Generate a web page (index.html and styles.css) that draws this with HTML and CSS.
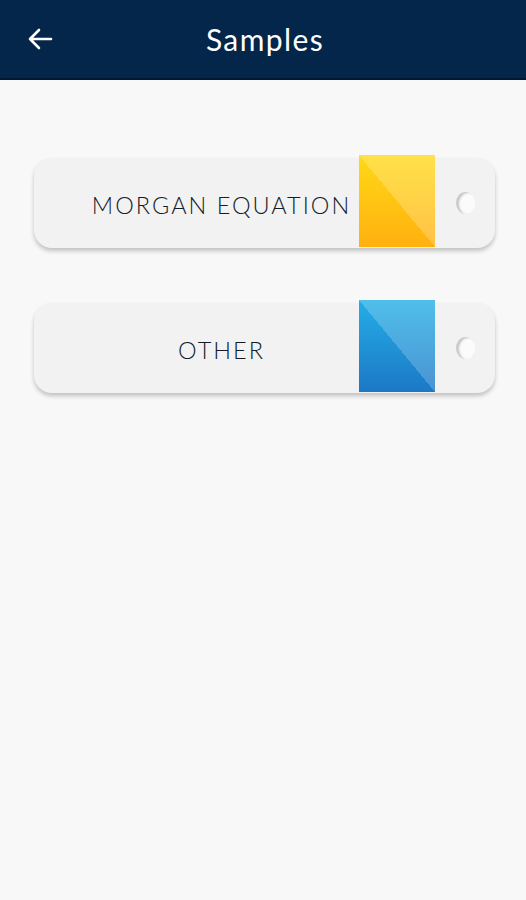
FILE: index.html
```html
<!DOCTYPE html>
<html lang="en">
<head>
  <meta charset="UTF-8" />
  <meta name="viewport" content="width=device-width, initial-scale=1.0"/>
  <title>Samples</title>
  <link rel="stylesheet" href="styles.css">
</head>
<body>

  <header class="topbar">
    <button class="back" aria-label="Back">
      <svg width="28" height="24" viewBox="0 0 28 24">
        <path d="M25 12H4M13 3L4 12l9 9" fill="none" stroke="#fff" stroke-width="2.6" stroke-linecap="round" stroke-linejoin="round"/>
      </svg>
    </button>
    <h1>Samples</h1>
  </header>

  <main class="list">
    <div class="tag">
      <span class="label">MORGAN EQUATION</span>
      <span class="swatch yellow"></span>
      <span class="hole-wrap"><span class="hole"></span></span>
    </div>
    <div class="tag">
      <span class="label">OTHER</span>
      <span class="swatch blue"></span>
      <span class="hole-wrap"><span class="hole"></span></span>
    </div>
  </main>

</body>
</html>
```

FILE: styles.css
```css
body {
  margin: 0;
  font-family: "Lato", "Noto Sans", sans-serif;
  background: #f8f8f8;
  min-height: 900px;
}
.topbar {
  height: 78px;
  background: #03264a;
  border-bottom: 2px solid #011a33;
  display: flex;
  align-items: center;
  justify-content: center;
  position: relative;
}
.topbar h1 {
  margin: 0 0 0 4px;
  color: #fff;
  font-size: 30px;
  font-weight: 400;
  letter-spacing: 1.4px;
}
.back {
  position: absolute;
  left: 26px;
  top: 27px;
  background: none;
  border: none;
  padding: 0;
  display: flex;
}
.list {
  padding: 78px 31px 0 34px;
  display: flex;
  flex-direction: column;
  gap: 55px;
}
.tag {
  height: 90px;
  background: #f2f2f2;
  border-radius: 18px;
  box-shadow: 0 3px 4px rgba(0,0,0,0.22);
  display: flex;
}
.label {
  flex: 1;
  padding: 4px 0 0 50px;
  display: flex;
  align-items: center;
  justify-content: center;
  font-size: 23.5px;
  font-weight: 300;
  letter-spacing: 2px;
  color: #141c2a;
}
.swatch {
  width: 76px;
  margin: -3px 0 1px;
}
.yellow {
  background:
    linear-gradient(to bottom left, rgba(255,255,255,0.22) 50%, rgba(255,255,255,0) 50%),
    linear-gradient(#ffd916, #ffb010);
}
.blue {
  background:
    linear-gradient(to bottom left, rgba(255,255,255,0.2) 50%, rgba(255,255,255,0) 50%),
    linear-gradient(#24aee6, #1c78c6);
}
.hole-wrap {
  width: 60px;
  display: flex;
  align-items: center;
  justify-content: center;
}
.hole {
  width: 19px;
  height: 22px;
  border-radius: 50%;
  background: #fbfbfb;
  box-shadow: inset 3px 1px 2px rgba(0,0,0,0.2);
}
```
